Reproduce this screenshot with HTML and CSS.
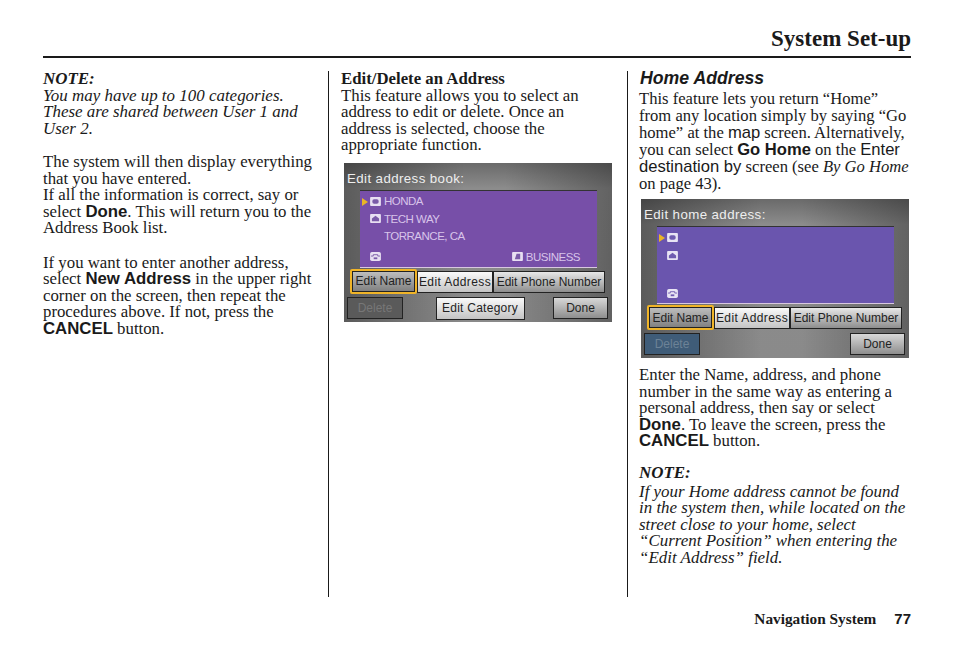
FILE: index.html
```html
<!DOCTYPE html>
<html lang="en">
<head>
    <meta charset="UTF-8">
    <title>System Set-up</title>
    <link rel="stylesheet" href="styles.css">
</head>
<body>
    <div class="page">
        <h1 class="title">System Set-up</h1>
        <div class="columns">
            <div class="col col-left">
                <p class="note note-first"><b>NOTE:</b>You may have up to 100 categories.<br>These are shared between User 1 and<br>User 2.</p>
                <p class="middle">The system will then display everything<br>that you have entered.<br>If all the information is correct, say or<br>select <span class="key">Done</span>. This will return you to the<br>Address Book list.</p>
                <p>If you want to enter another address,<br>select <span class="key">New Address</span> in the upper right<br>corner on the screen, then repeat the<br>procedures above. If not, press the<br><span class="key">CANCEL</span> button.</p>
            </div>
            <div class="col col-mid">
                <p class="intro"><b>Edit/Delete an Address</b><br>This feature allows you to select an<br>address to edit or delete. Once an<br>address is selected, choose the<br>appropriate function.</p>
                <div class="screen screen-book">
                    <div class="screen-title">Edit address book:</div>
                    <div class="panel">
                        <div class="panel-row">
                            <span class="cursor"></span>
                            <svg class="ico" viewBox="0 0 12 10"><rect width="12" height="10" rx="1" fill="#e8dff2"/><rect x="2.5" y="2.5" width="7" height="5" rx="2" fill="#7a5aa8"/></svg>
                            <span>HONDA</span>
                        </div>
                        <div class="panel-row">
                            <svg class="ico" viewBox="0 0 12 10"><rect width="12" height="10" rx="1" fill="#e8dff2"/><path d="M2 5 6 2l4 3v3H2z" fill="#7a5aa8"/></svg>
                            <span>TECH WAY</span>
                        </div>
                        <div class="panel-row panel-line">TORRANCE, CA</div>
                        <div class="panel-row panel-last">
                            <svg class="ico" viewBox="0 0 12 10"><rect width="12" height="10" rx="2" fill="#e8dff2"/><path d="M1 4.5H3.500V3H8.500V4.500H11" fill="none" stroke="#7a5aa8"/><rect x="4" y="6" width="4" height="2" fill="#7a5aa8"/></svg>
                            <span class="category">
                                <svg class="ico" viewBox="0 0 12 10"><rect width="12" height="10" rx="1" fill="#e8dff2"/><path d="M3 8 5 2h4v6z" fill="#7a5aa8"/></svg>
                                BUSINESS
                            </span>
                        </div>
                    </div>
                    <div class="btn-row">
                        <span class="btn btn-sel">Edit Name</span>
                        <span class="btn btn-light btn-addr">Edit Address</span>
                        <span class="btn btn-light btn-phone">Edit Phone Number</span>
                    </div>
                    <div class="btn-row btn-row-low">
                        <span class="btn btn-off">Delete</span>
                        <span class="btn btn-light btn-cat">Edit Category</span>
                        <span class="btn btn-done">Done</span>
                    </div>
                </div>
            </div>
            <div class="col col-right">
                <h2 class="sub">Home Address</h2>
                <p class="intro">This feature lets you return “Home”<br>from any location simply by saying “Go<br>home” at the <span class="sans">map</span> screen. Alternatively,<br>you can select <span class="key">Go Home</span> on the <span class="sans">Enter</span><br><span class="sans">destination by</span> screen (see <i>By Go Home</i><br>on page 43).</p>
                <div class="screen screen-home">
                    <div class="screen-title">Edit home address:</div>
                    <div class="panel">
                        <div class="panel-row">
                            <span class="cursor"></span>
                            <svg class="ico" viewBox="0 0 12 10"><rect width="12" height="10" rx="1" fill="#e8e4f4"/><rect x="2.5" y="2.5" width="7" height="5" rx="2" fill="#6f5cb0"/></svg>
                        </div>
                        <div class="panel-row">
                            <svg class="ico" viewBox="0 0 12 10"><rect width="12" height="10" rx="1" fill="#e8e4f4"/><path d="M2 5 6 2l4 3v3H2z" fill="#6f5cb0"/></svg>
                        </div>
                        <div class="panel-row panel-line"></div>
                        <div class="panel-row panel-last">
                            <svg class="ico" viewBox="0 0 12 10"><rect width="12" height="10" rx="2" fill="#e8e4f4"/><path d="M1 4.5H3.500V3H8.500V4.500H11" fill="none" stroke="#6f5cb0"/><rect x="4" y="6" width="4" height="2" fill="#6f5cb0"/></svg>
                        </div>
                    </div>
                    <div class="btn-row">
                        <span class="btn btn-sel">Edit Name</span>
                        <span class="btn btn-light btn-addr">Edit Address</span>
                        <span class="btn btn-light btn-phone">Edit Phone Number</span>
                    </div>
                    <div class="btn-row btn-row-low">
                        <span class="btn btn-off btn-off-blue">Delete</span>
                        <span class="btn btn-done btn-push">Done</span>
                    </div>
                </div>
                <p class="after-screen">Enter the Name, address, and phone<br>number in the same way as entering a<br>personal address, then say or select<br><span class="key">Done</span>. To leave the screen, press the<br><span class="key">CANCEL</span> button.</p>
                <p class="note"><b>NOTE:</b>If your Home address cannot be found<br>in the system then, while located on the<br>street close to your home, select<br>“Current Position” when entering the<br>“Edit Address” field.</p>
            </div>
        </div>
        <div class="footer">Navigation System<span class="page-no">77</span></div>
    </div>
</body>
</html>
```

FILE: styles.css
```css
body {
    margin: 0;
    background-color: #fff;
    color: #1a1a1a;
    font-family: "Liberation Serif", serif;
    font-size: 16.8px;
    line-height: 16.5px;
}
.page {
    width: 868px;
    margin-left: 43px;
}
.title {
    margin: 0;
    padding-top: 25px;
    height: 31px;
    border-bottom: 2px solid #1a1a1a;
    text-align: right;
    font-size: 23px;
    line-height: 28px;
}
.columns {
    display: grid;
    grid-template-columns: 285px 299px 284px;
    margin-top: 13px;
    height: 526px;
}
.col p {
    margin: 0 0 17px;
    white-space: nowrap;
}
.col-mid,
.col-right {
    border-left: 1px solid #1a1a1a;
}
.col-mid {
    padding-left: 12px;
}
.col-right {
    padding-left: 11px;
}
.note {
    font-size: 16.95px;
    font-style: italic;
}
.note b {
    display: block;
    margin-bottom: 2.5px;
}
.col .note-first {
    margin-bottom: 17px;
}
.note-first b {
    margin-bottom: 0;
}
.col .middle {
    margin-bottom: 18px;
}
.col .intro {
    margin-bottom: 9px;
}
.col-right .intro {
    margin-bottom: 7px;
    font-size: 16.6px;
    line-height: 17px;
}
.col .after-screen {
    margin-bottom: 15px;
}
.key {
    font-family: "Liberation Sans", sans-serif;
    font-weight: bold;
}
.sans {
    font-family: "Liberation Sans", sans-serif;
}
.sub {
    margin: 0 0 4px 1px;
    font-family: "Liberation Sans", sans-serif;
    font-size: 17.7px;
    font-style: italic;
    line-height: 15px;
}
.screen {
    width: 268px;
    height: 159px;
    box-sizing: border-box;
    padding: 8px 0 0;
    background:
        linear-gradient(90deg, rgba(0, 0, 0, .35), rgba(0, 0, 0, 0) 45%, rgba(0, 0, 0, 0) 60%, rgba(0, 0, 0, .3)),
        linear-gradient(180deg, #6a6a6a 0%, #8c8c8c 16%, #8a8a8a 100%);
    color: #eee;
    font-family: "Liberation Sans", sans-serif;
    font-size: 12px;
    line-height: 16px;
}
.screen-book {
    margin-left: 3px;
}
.screen-home {
    margin: 0 0 9px 2px;
}
.screen-title {
    padding-left: 3px;
    font-size: 13.3px;
    letter-spacing: .4px;
}
.panel {
    display: flex;
    flex-direction: column;
    width: 237px;
    height: 78px;
    box-sizing: border-box;
    margin: 3px 0 0 16px;
    padding: 2px 17px 0 10px;
    border-top: 1px solid #333;
    border-bottom: 1px solid #d8c8e0;
    background-color: #774fa8;
    color: #d8c4ea;
    font-size: 11.5px;
    letter-spacing: -.5px;
}
.screen-home .panel {
    background-color: #6a55ae;
}
.panel-row {
    position: relative;
    display: flex;
    align-items: center;
    gap: 3px;
    height: 17.5px;
}
.panel-line {
    padding-left: 14px;
}
.panel-last {
    justify-content: space-between;
    margin-top: 3px;
}
.category {
    display: flex;
    align-items: center;
    gap: 3px;
}
.ico {
    width: 11px;
    height: 9px;
    flex: none;
}
.cursor {
    position: absolute;
    left: -8px;
    top: 5px;
    border-left: 6px solid #e9b526;
    border-top: 4px solid transparent;
    border-bottom: 4px solid transparent;
}
.btn-row {
    display: flex;
    margin: 3px 0 0 6px;
    height: 22px;
}
.btn-row-low {
    margin: 4px 0 0 3px;
    justify-content: space-between;
    padding-right: 4px;
}
.btn {
    display: flex;
    align-items: center;
    justify-content: center;
    box-sizing: border-box;
    height: 22px;
    border: 1px solid #222;
    color: #222;
    white-space: nowrap;
}
.btn-sel {
    width: 67px;
    height: 25px;
    margin-top: -2px;
    border: 2px solid #f0b428;
    border-radius: 2px;
    background: linear-gradient(180deg, #c0c0c0, #7e7e7e);
    box-shadow: inset 0 0 0 1px #222;
}
.btn-light {
    background: linear-gradient(180deg, #fafafa, #c4c4c4);
}
.btn-addr {
    width: 76px;
    letter-spacing: .4px;
}
.btn-phone {
    width: 112px;
    background: linear-gradient(180deg, #e8e8e8, #8e8e8e);
}
.btn-off {
    width: 56px;
    background-color: #5a5a5a;
    color: #777;
}
.btn-off-blue {
    background-color: #3f5c78;
    color: #6c8296;
}
.btn-cat {
    width: 89px;
    height: 23px;
    margin-left: 4px;
    letter-spacing: .25px;
}
.btn-done {
    width: 55px;
    background: linear-gradient(180deg, #d8d8d8, #8e8e8e);
}
.btn-push {
    margin-left: auto;
}
.footer {
    margin-top: 14px;
    text-align: right;
    font-size: 15.3px;
    font-weight: bold;
    line-height: 16px;
}
.page-no {
    margin-left: 18px;
    font-family: "Liberation Sans", sans-serif;
    font-size: 15px;
}
```
